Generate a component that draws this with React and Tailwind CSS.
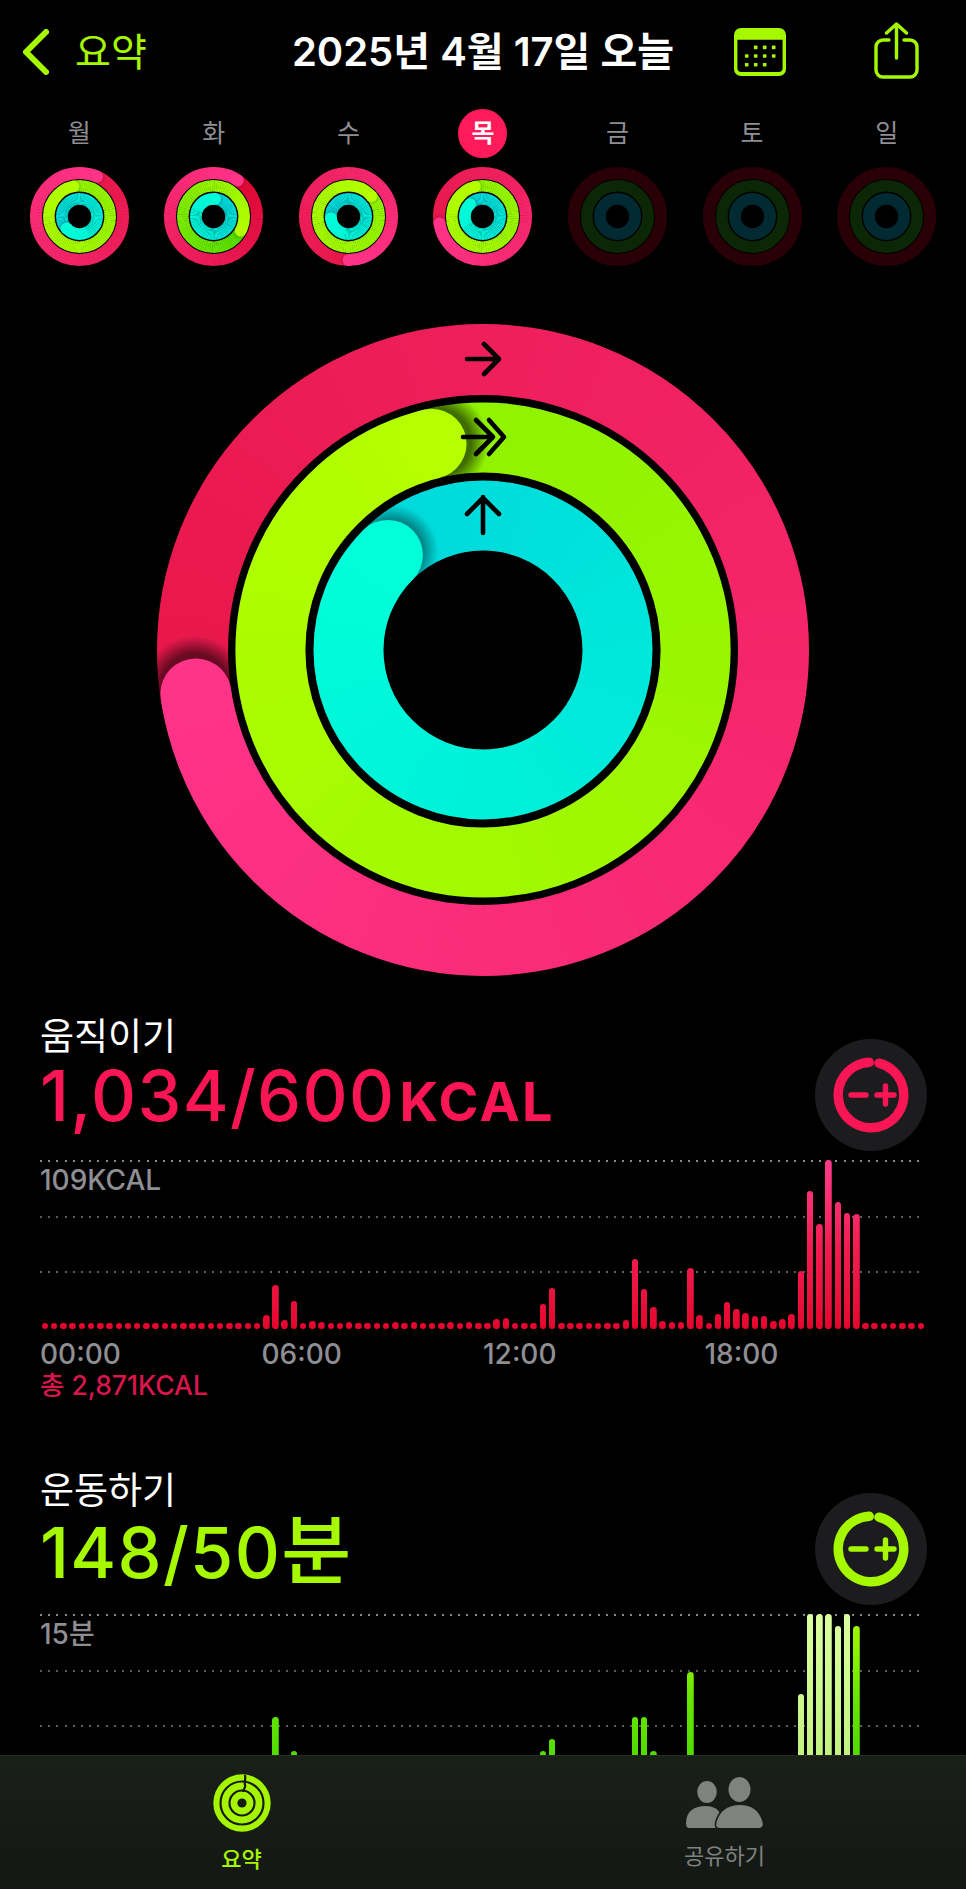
import React from 'react'

const polar = (c, r, deg) => {
  const a = ((deg - 90) * Math.PI) / 180
  return [c + r * Math.cos(a), c + r * Math.sin(a)]
}

const arc = (c, r, from, to) => {
  const [x1, y1] = polar(c, r, from)
  const [x2, y2] = polar(c, r, to)
  const large = to - from > 180 ? 1 : 0
  return `M${x1} ${y1}A${r} ${r} 0 ${large} 1 ${x2} ${y2}`
}

const hex = (s) => [1, 3, 5].map((i) => parseInt(s.slice(i, i + 2), 16))
const mix = (a, b, t) => {
  const [pa, pb] = [hex(a), hex(b)]
  return `rgb(${pa.map((v, i) => Math.round(v + (pb[i] - v) * t)).join(',')})`
}

// one ring: colour runs backwards from the cap, one full lap, then the cap and its shadow on top
function Ring({ id, c, r, w, end, bright, dark, steps, shade = 0.55, spread = 0.74 }) {
  const seg = 360 / steps
  const all = Array.from({ length: steps }, (_, i) => {
    const t = (i + 0.5) / steps
    const to = end - i * seg
    return { t, from: to - seg - 0.6, to }
  })
  const [cx, cy] = polar(c, r, end)
  const [sx, sy] = polar(c, r, end + ((w * 0.08) / (2 * Math.PI * r)) * 360)
  const strip = (list) =>
    list.map((s, i) => <path key={i} d={arc(c, r, s.from, s.to)} fill="none" stroke={mix(bright, dark, s.t)} strokeWidth={w + 2} />)

  return (
    <g>
      <mask id={id} maskUnits="userSpaceOnUse" x="0" y="0" width={c * 2} height={c * 2}>
        <circle cx={c} cy={c} r={r} fill="none" stroke="#fff" strokeWidth={w} />
      </mask>
      <radialGradient id={`${id}-s`}>
        <stop offset="0.66" stopColor="#000" stopOpacity={shade} />
        <stop offset="1" stopColor="#000" stopOpacity="0" />
      </radialGradient>
      <g mask={`url(#${id})`}>
        {strip([...all].reverse())}
        <circle cx={sx} cy={sy} r={w * spread} fill={`url(#${id}-s)`} />
        {strip(all.slice(0, Math.ceil(steps * 0.2)).reverse())}
      </g>
      <circle cx={cx} cy={cy} r={w / 2} fill={bright} />
    </g>
  )
}

const RED = { bright: '#ff3388', dark: '#e8174a' }
const GREEN = { bright: '#b4ff00', dark: '#8ef200' }
const CYAN = { bright: '#00ffd9', dark: '#00d8dc' }

function BigRings() {
  return (
    <svg width="652" height="652" viewBox="0 0 652 652" className="block mx-auto">
      <Ring id="big-r" c={326} r={290.5} w={71} end={261.3} steps={240} {...RED} />
      <Ring id="big-g" c={326} r={212.6} w={70} end={346} steps={240} {...GREEN} />
      <Ring id="big-c" c={326} r={134.5} w={70} end={315} steps={240} shade={0.4} spread={0.66} {...CYAN} />
      <g fill="none" stroke="#000" strokeWidth="4.6" strokeLinecap="round" strokeLinejoin="round">
        <path d="M310 35H341M327 20L342 35L327 50" />
        <path d="M306 113H336M319 96L336 113L319 130M332 96L347 113L332 130" />
        <path d="M326 209V173M310 190L326 174L342 190" />
      </g>
    </svg>
  )
}

const week = [
  { label: '월', ends: [24, 349, 227] },
  { label: '화', ends: [34, 118, 5], darks: ['#de0833', '#52dc00', '#00d8dc'] },
  { label: '수', ends: [180, 49, 265] },
  { label: '목', ends: [261, 346, 315], today: true },
  { label: '금' },
  { label: '토' },
  { label: '일' },
]

function SmallRings({ day, index }) {
  const size = 99
  const c = size / 2
  if (!day.ends) {
    return (
      <svg width={size} height={size} viewBox="0 0 99 99" fill="none" className="block">
        <circle cx={c} cy={c} r={43.5} stroke="#2a0007" strokeWidth="12" />
        <circle cx={c} cy={c} r={30.7} stroke="#0c2705" strokeWidth="11.6" />
        <circle cx={c} cy={c} r={17.6} stroke="#022a33" strokeWidth="11.8" />
      </svg>
    )
  }
  const darks = day.darks || [RED.dark, GREEN.dark, CYAN.dark]
  const soft = { steps: 90, shade: 0.14, spread: 0.66 }
  return (
    <svg width={size} height={size} viewBox="0 0 99 99" className="block">
      <Ring id={`d${index}-r`} c={c} r={43.5} w={12} end={day.ends[0]} bright={RED.bright} dark={darks[0]} {...soft} />
      <Ring id={`d${index}-g`} c={c} r={30.7} w={11.6} end={day.ends[1]} bright={GREEN.bright} dark={darks[1]} {...soft} />
      <Ring id={`d${index}-c`} c={c} r={17.6} w={11.8} end={day.ends[2]} bright={CYAN.bright} dark={darks[2]} {...soft} />
    </svg>
  )
}

function Header() {
  return (
    <div className="grid grid-cols-[1fr_auto_1fr] items-center h-[104px]">
      <div className="flex items-center pl-[23px]">
        <svg width="26" height="46" viewBox="0 0 26 46" fill="none" stroke="#a6f800" strokeWidth="6" strokeLinecap="round" strokeLinejoin="round">
          <path d="M23 3L3 23L23 43" />
        </svg>
        <span className="ml-[26px] text-[39px] leading-[44px] text-[#a6f800]">요약</span>
      </div>
      <h1 className="text-[40px] leading-[46px] font-semibold text-white">2025년 4월 17일 오늘</h1>
      <div className="flex items-center justify-end gap-[88px] pr-[47px]">
        <svg width="52" height="48" viewBox="0 0 52 48" fill="#a6f800">
          <path fillRule="evenodd" d="M7 0H45A7 7 0 0 1 52 7V41A7 7 0 0 1 45 48H7A7 7 0 0 1 0 41V7A7 7 0 0 1 7 0ZM3.4 11.7V40A4 4 0 0 0 7.4 44H44.6A4 4 0 0 0 48.6 40V11.7Z" />
          <g>
            {[
              [21.7, 19.4], [30.7, 19.4], [39.7, 19.4],
              [12.7, 28], [21.7, 28], [30.7, 28], [39.7, 28],
              [12.7, 36.7], [21.7, 36.7], [30.7, 36.7],
            ].map(([x, y]) => (
              <rect key={`${x}-${y}`} x={x - 1.8} y={y - 1.8} width="3.6" height="3.6" rx="0.7" />
            ))}
          </g>
        </svg>
        <svg width="45" height="57" viewBox="0 0 45 57" fill="none" stroke="#a6f800" strokeWidth="3.4" strokeLinecap="round" strokeLinejoin="round" className="mt-[-4px]">
          <path d="M15 18H9A7 7 0 0 0 2 25V48A7 7 0 0 0 9 55H36A7 7 0 0 0 43 48V25A7 7 0 0 0 36 18H30" />
          <path d="M22.5 36V2M12.5 11L22.5 2L32.5 11" />
        </svg>
      </div>
    </div>
  )
}

function WeekStrip() {
  return (
    <div className="grid grid-cols-7 px-[12px]">
      {week.map((d, i) => (
        <div key={d.label} className="flex flex-col items-center">
          <div className={`flex items-center justify-center w-[49px] h-[49px] rounded-full text-[25px] ${d.today ? 'bg-[#ff1a5a] text-white font-semibold' : 'text-[#8e8e93]'}`}>
            {d.label}
          </div>
          <div className="mt-[9px]">
            <SmallRings day={d} index={i} />
          </div>
        </div>
      ))}
    </div>
  )
}

function GoalButton({ color }) {
  return (
    <div className="flex items-center justify-center w-[112px] h-[112px] rounded-full bg-[#1c1c1e] mt-[26px] mr-[-1px]">
      <svg width="76" height="76" viewBox="0 0 76 76" fill="none" stroke={color} strokeLinecap="round">
        <path d={arc(38, 32.8, 14, 357)} strokeWidth="9.4" />
        <path d="M18 38H33M44 38H61M52.5 29V47" strokeWidth="5.4" />
      </svg>
    </div>
  )
}

function Dotted({ color, label }) {
  return (
    <div className="h-[55.5px]">
      <div className={`h-[2px] ${color}`} />
      {label && <div className="mt-[3px] text-[28px] leading-[30px] font-medium text-[#8e8e93]">{label}</div>}
    </div>
  )
}

const BAR_TOTAL = 96

function Bars({ heights, style }) {
  return (
    <div className="absolute left-[1.75px] bottom-0 w-[882.5px] flex items-end justify-between">
      {Array.from({ length: BAR_TOTAL }, (_, i) => {
        const h = heights[i] || style.rest
        const light = style.lightFrom !== undefined && i >= style.lightFrom && i <= style.lightTo
        return (
          <div
            key={i}
            className={`w-[6.5px] rounded-full bg-no-repeat bg-bottom bg-size-[100%_169px] ${light ? style.light : style.bar}`}
            style={{ height: h }}
          />
        )
      })}
    </div>
  )
}

function Chart({ label, heights, style }) {
  return (
    <div className="relative h-[169px]">
      <Dotted label={label} color="bg-[repeating-linear-gradient(90deg,#8a8a8a_0_2px,transparent_2px_8.2px)]" />
      <Dotted color="bg-[repeating-linear-gradient(90deg,#5c5c5c_0_2px,transparent_2px_8.2px)]" />
      <Dotted color="bg-[repeating-linear-gradient(90deg,#5c5c5c_0_2px,transparent_2px_8.2px)]" />
      <Bars heights={heights} style={style} />
    </div>
  )
}

const moveHeights = {
  24: 14, 25: 44, 26: 9, 27: 28, 29: 8, 30: 7.5, 33: 7.5, 38: 7.5, 40: 7.5, 44: 7.5, 46: 7.5,
  49: 10, 50: 11, 54: 25, 55: 41, 63: 9, 64: 70, 65: 40, 66: 22, 67: 8, 68: 7, 69: 7,
  70: 61, 71: 14, 73: 15, 74: 27, 75: 20, 76: 16, 77: 13, 78: 13, 79: 8, 80: 10, 81: 15,
  82: 58, 83: 138, 84: 105, 85: 169, 86: 127, 87: 116, 88: 115,
}

const exerciseHeights = {
  25: 66, 27: 32, 54: 32, 55: 44, 64: 66, 65: 66, 66: 32, 70: 111,
  82: 89, 83: 169, 84: 169, 85: 169, 86: 157, 87: 169, 88: 157,
}

const moveStyle = {
  rest: 6.5,
  bar: 'bg-linear-to-t from-[#e5062c] via-[#f31c52] via-50% to-[#ff3a8c]',
}

const exerciseStyle = {
  rest: 0,
  bar: 'bg-linear-to-t from-[#45d600] via-[#66e600] via-50% to-[#a8fb00]',
  light: 'bg-linear-to-t from-[#bcf07a] to-[#dcffa0]',
  lightFrom: 82,
  lightTo: 87,
}

function Section({ title, value, unit, unitClass, color, textClass, children }) {
  return (
    <section className="px-[40px]">
      <div className="flex justify-between h-[147px]">
        <div>
          <h2 className="mt-[2px] text-[37px] leading-[44px] text-white">{title}</h2>
          <p className={`mt-[2px] leading-[70px] text-[70px] font-medium tracking-[1.3px] whitespace-nowrap ${textClass}`}>
            {value}
            <span className={unitClass}>{unit}</span>
          </p>
        </div>
        <GoalButton color={color} />
      </div>
      {children}
    </section>
  )
}

function TabBar() {
  return (
    <nav className="absolute left-0 right-0 bottom-0 h-[134px] grid grid-cols-2 bg-linear-to-b from-[#192018] to-[#141714] border-t border-[#262b24]">
      <div className="flex flex-col items-center pt-[18px]">
        <svg width="58" height="58" viewBox="0 0 58 58" className="block">
          <circle cx="29" cy="29" r="28.7" fill="#a6f500" />
          <g fill="none" stroke="#161a15" strokeWidth="2.2">
            <circle cx="29" cy="29" r="21.5" />
            <circle cx="29" cy="29" r="12.5" />
            <path d="M32 1C33 5 31 8 32 11C33 14 30 15 30 18" />
          </g>
          <circle cx="29" cy="29" r="4.6" fill="#161a15" />
        </svg>
        <span className="mt-[13px] text-[22px] leading-[28px] font-medium text-[#a6f500]">요약</span>
      </div>
      <div className="flex flex-col items-center pt-[21px]">
        <svg width="78" height="52" viewBox="0 0 78 52" fill="#7f827e" className="block">
          <ellipse cx="21" cy="15" rx="9.8" ry="11" />
          <ellipse cx="53.5" cy="12.5" rx="11" ry="12.5" />
          <path d="M3 51H31Q36 51 36 46C36 34 30 29 19 29C9 29 0 34 0 46Q0 51 3 51Z" />
          <path d="M34 51H72Q78 51 76.5 45C73 33 65 28 54 28C43 28 34 33 30.5 45Q29 51 34 51Z" stroke="#171b17" strokeWidth="3" paintOrder="stroke" />
        </svg>
        <span className="mt-[13px] text-[22px] leading-[28px] text-[#7f827e]">공유하기</span>
      </div>
    </nav>
  )
}

export default function App() {
  return (
    <div className="relative w-[966px] h-[1889px] overflow-hidden bg-black font-['Inter','Noto_Sans_CJK_KR',sans-serif]">
      <Header />
      <div className="mt-[5px]">
        <WeekStrip />
      </div>
      <div className="mt-[58px]">
        <BigRings />
      </div>
      <div className="mt-[37px]">
        <Section
          title="움직이기"
          value="1,034/600"
          unit="KCAL"
          unitClass="ml-[4px] text-[54px] font-bold tracking-[2.4px]"
          color="#fa1654"
          textClass="text-[#fa1654]"
        >
          <Chart label="109KCAL" heights={moveHeights} style={moveStyle} />
          <div className="grid grid-cols-4 mt-[10px] text-[28px] leading-[30px] font-medium text-[#8e8e93]">
            <span>00:00</span>
            <span>06:00</span>
            <span>12:00</span>
            <span>18:00</span>
          </div>
          <p className="mt-[1px] text-[26.5px] leading-[30px] font-medium text-[#d8164c]">총 2,871KCAL</p>
        </Section>
      </div>
      <div className="mt-[67px]">
        <Section title="운동하기" value="148/50" unit="분" unitClass="text-[76px]" color="#a6f800" textClass="text-[#a6f800]">
          <Chart label="15분" heights={exerciseHeights} style={exerciseStyle} />
        </Section>
      </div>
      <TabBar />
    </div>
  )
}
